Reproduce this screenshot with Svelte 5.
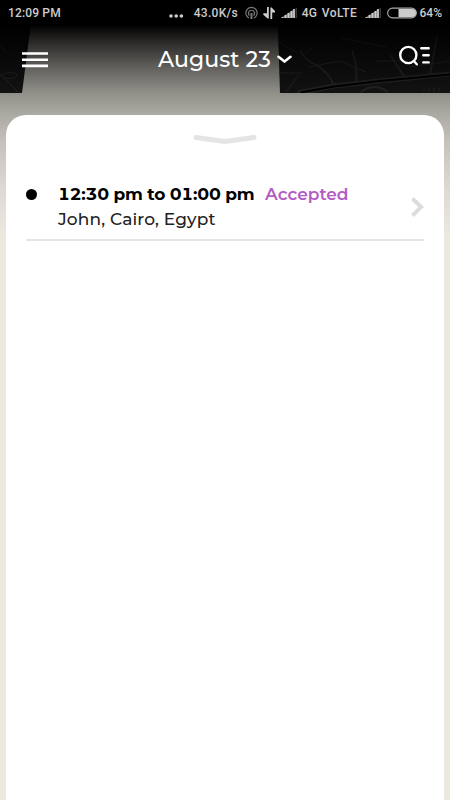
<style>
:global(body) {
	margin: 0;
	background: #ebe8e0;
}

.screen {
	position: relative;
	display: flex;
	flex-direction: column;
	height: 800px;
	overflow: hidden;
	font-family: Montserrat, Inter, sans-serif;
	background: linear-gradient(#000 25px, #31302e 45px, #62615d 68px, #8d8c86 91px, #aaa9a1 113px, #c8c4bd 145px, #dedad3 190px, #ebe8e0 235px);
}

.map {
	position: absolute;
	top: 0;
	left: 0;
}

.status {
	position: relative;
	display: flex;
	align-items: center;
	height: 26px;
	box-sizing: border-box;
	padding: 0 8px 0 8px;
	font: 500 12px/26px Roboto, sans-serif;
	color: #ccc;
}

.status span {
	white-space: nowrap;
}

.status svg {
	flex: none;
}

.clock {
	width: 161px;
	letter-spacing: 0.15px;
}

.dots {
	width: 25px;
}

.speed {
	width: 51px;
	letter-spacing: 0.3px;
}

.cast {
	width: 18px;
}

.arrows {
	width: 18px;
}

.signal {
	width: 21px;
}

.network {
	width: 63px;
	letter-spacing: 0.4px;
	word-spacing: 1px;
}

.battery {
	width: 33px;
	margin-left: 1px;
}

.bar {
	position: relative;
	display: grid;
	grid-template-columns: 1fr auto 1fr;
	align-items: center;
	height: 67px;
	box-sizing: border-box;
	padding: 0 19px 0 22px;
}

button {
	display: flex;
	align-items: center;
	margin: 0;
	padding: 0;
	border: 0;
	background: none;
	font: inherit;
	color: inherit;
	text-align: left;
	cursor: pointer;
}

.date {
	gap: 5px;
	margin-left: -2px;
	font-size: 22px;
	font-weight: 500;
	line-height: 28px;
	color: #fff;
}

.date span {
	width: 114px;
	white-space: nowrap;
	letter-spacing: 0.1px;
}

.search {
	justify-self: end;
	margin-bottom: 8px;
}

.sheet {
	position: relative;
	flex: 1;
	margin: 22px 6px 0;
	padding: 0 20px;
	border-radius: 20px 20px 0 0;
	background: #fff;
}

.handle {
	display: block;
	margin: 0 auto;
	padding-top: 19px;
}

.trip {
	width: 100%;
	height: 77px;
	margin-top: 19px;
	padding-bottom: 3px;
	border-bottom: 2px solid #e5e5e5;
	box-sizing: border-box;
}

.bullet {
	width: 11px;
	height: 11px;
	margin: 0 21px 11px 0;
	border-radius: 50%;
	background: #000;
}

.details {
	flex: 1;
	padding-top: 13px;
	font-size: 17px;
	line-height: 25px;
}

.line {
	display: flex;
	white-space: nowrap;
}

.time {
	width: 207px;
	font-weight: 700;
	font-variant-numeric: tabular-nums;
	letter-spacing: -0.22px;
	color: #000;
}

.state {
	font-weight: 600;
	color: #b35cc6;
}

.place {
	font-weight: 500;
	letter-spacing: 0.15px;
	color: #222;
}

.chevron {
	margin-top: 14px;
}
</style>

<script>
  let date = 'August 23'

  const trips = [
    { time: '12:30 pm to 01:00 pm', state: 'Accepted', place: 'John, Cairo, Egypt' }
  ]
</script>

{#snippet signal()}
  <svg class="signal" width="21" height="12" viewBox="0 0 21 12">
    <path d="M0 11L12 3V11Z" fill="#777" />
    <path d="M1.5 11V10M4.5 11V8M7.5 11V6M10.5 11V4M13 11V2" stroke="#ccc" stroke-width="1.8" />
    <path d="M15.2 11V1" stroke="#444" stroke-width="1.3" />
  </svg>
{/snippet}

<div class="screen">
  <svg class="map" width="450" height="93" viewBox="0 0 450 93">
    <defs>
      <linearGradient id="night" x2="0" y2="1">
        <stop offset=".27" stop-color="#000" />
        <stop offset="1" stop-color="#121212" />
      </linearGradient>
      <linearGradient id="road" x1="0" y1="25" x2="0" y2="93" gradientUnits="userSpaceOnUse">
        <stop offset="0" stop-color="#060606" />
        <stop offset="1" stop-color="#222" />
      </linearGradient>
    </defs>
    <path d="M0 0H34L22 93H0Z" fill="url(#night)" />
    <path d="M277 0L280 93H450V0Z" fill="url(#night)" />
    <g fill="none" stroke="url(#road)">
      <path d="M0 74L18 92M0 76Q11 69 18 75Q12 81 3 77M0 45L7 53" />
      <path d="M279 42L299 54M286 92L301 72M279 73H299M302 56L312 48M341 38L386 47M309 67L340 61L366 72M376 61H402M410 67L450 61M424 89V92M429 88V92M434 88V92M439 87V92M408 55L423 63" />
      <path d="M300 50Q304 60 318 66Q330 74 334 86M352 50Q358 68 356 82M390 55L404 76M437 36L430 74M361 92Q374 82 388 92" stroke-width="2" />
      <path d="M298 93L334 86L380 81L450 74" stroke-width="5" />
    </g>
    <path d="M300 92.5L334 86.5L380 81L450 74.5" fill="none" stroke="#000" stroke-width="2.2" />
  </svg>

  <div class="status">
    <span class="clock">12:09 PM</span>
    <svg class="dots" width="25" height="12" viewBox="0 0 25 12">
      <g fill="#ccc"><circle cx="2" cy="9" r="1.8" /><circle cx="7.2" cy="9" r="1.8" /><circle cx="12.4" cy="9" r="1.8" /></g>
    </svg>
    <span class="speed">43.0K/s</span>
    <svg class="cast" width="18" height="14" viewBox="0 0 18 14">
      <g fill="none" stroke="#777" stroke-width="1.2">
        <path d="M4 12A5.6 5.6 0 1 1 9 12M4.5 9.5A3 3 0 1 1 8.5 9.5" />
        <path d="M6.5 7V13" stroke-width="2" />
      </g>
    </svg>
    <svg class="arrows" width="18" height="14" viewBox="0 0 18 14">
      <path d="M4 1H5.8V12.5H4.6L.3 8.7V7.3H4ZM7.4 13V1.5H8.6L12 5V6.4H9.2V13Z" fill="#ccc" />
    </svg>
    {@render signal()}
    <span class="network">4G VoLTE</span>
    {@render signal()}
    <svg class="battery" width="33" height="12" viewBox="0 0 33 12">
      <rect x=".6" y="1.1" width="28.8" height="9.8" rx="4.9" fill="none" stroke="#aaa" stroke-width="1.1" />
      <path d="M11.5 2H25A4 4 0 0 1 25 10H11.5Z" fill="#ccc" />
    </svg>
    <span>64%</span>
  </div>

  <div class="bar">
    <button aria-label="Menu">
      <svg width="26" height="16" viewBox="0 0 26 16">
        <path d="M0 1.5H26M0 7.7H26M0 13.9H26" stroke="#fff" stroke-width="2.6" />
      </svg>
    </button>
    <button class="date">
      <span>{ date }</span>
      <svg width="16" height="10" viewBox="0 0 16 10">
        <path d="M1.5 1.8L7.5 6.6L13.5 1.8" fill="none" stroke="#fff" stroke-width="2.6" stroke-linecap="round" stroke-linejoin="round" />
      </svg>
    </button>
    <button class="search" aria-label="Search">
      <svg width="32" height="22" viewBox="0 0 32 22">
        <g fill="none" stroke="#fff" stroke-width="2.4" stroke-linecap="round">
          <circle cx="9.3" cy="10" r="8.1" />
          <path d="M14.8 16L17.8 19.3M22.3 3.2H29.7M24.3 10.2H29.7M24.3 17.4H29.7" />
        </g>
      </svg>
    </button>
  </div>

  <div class="sheet">
    <svg class="handle" width="64" height="11" viewBox="0 0 64 11">
      <path d="M3 3.5L32 7.5L61 3.5" fill="none" stroke="#e4e4e4" stroke-width="5" stroke-linecap="round" stroke-linejoin="round" />
    </svg>
    {#each trips as trip}
      <button class="trip">
        <span class="bullet"></span>
        <span class="details">
          <span class="line">
            <span class="time">{ trip.time }</span>
            <span class="state">{ trip.state }</span>
          </span>
          <span class="line place">{ trip.place }</span>
        </span>
        <svg class="chevron" width="13" height="20" viewBox="0 0 13 20">
          <path d="M1.5 1.5L10.2 10L1.5 18.5" fill="none" stroke="#dcdcdc" stroke-width="4" />
        </svg>
      </button>
    {/each}
  </div>
</div>
